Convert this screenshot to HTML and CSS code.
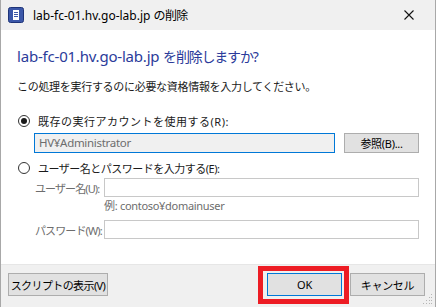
FILE: index.html
```html
<!DOCTYPE html>
<html lang="ja">
<head>
    <meta charset="UTF-8">
    <title>lab-fc-01.hv.go-lab.jp の削除</title>
    <link rel="stylesheet" href="styles.css">
</head>
<body>
    <div class="window">
        <div class="titlebar">
            <svg class="app-icon" width="16" height="16" viewBox="0 0 16 16">
                <rect x="0.5" y="0.5" width="15" height="15" rx="2" fill="#3b57a8" stroke="#1f3478"/>
                <rect x="5" y="3" width="6" height="10" fill="#fff"/>
                <rect x="6" y="5" width="4" height="1" fill="#3b57a8"/>
                <rect x="6" y="7" width="4" height="1" fill="#3b57a8"/>
                <rect x="6" y="9" width="4" height="1" fill="#3b57a8"/>
            </svg>
            <span class="title">lab-fc-01.hv.go-lab.jp <span class="cjk">の削除</span></span>
            <svg class="close" width="10" height="10" viewBox="0 0 10 10">
                <path d="M0.5 0.5 L9.5 9.5 M9.5 0.5 L0.5 9.5" stroke="#111" stroke-width="1.1"/>
            </svg>
        </div>

        <div class="content">
            <h1 class="instruction">lab-fc-01.hv.go-lab.jp <span class="cjk">を削除しますか?</span></h1>
            <p class="desc">この処理を実行するのに必要な資格情報を入力してください。</p>

            <label class="radio-row first">
                <span class="radio checked"></span>
                <span>既存の実行アカウントを使用する(R):</span>
            </label>
            <div class="account-row">
                <div class="textbox readonly focused">HV¥Administrator</div>
                <button class="btn">参照(B)...</button>
            </div>

            <label class="radio-row second">
                <span class="radio"></span>
                <span>ユーザー名とパスワードを入力する(E):</span>
            </label>
            <div class="cred-grid">
                <span class="field-label">ユーザー名(U):</span>
                <div class="textbox"></div>
                <span></span>
                <span class="hint">例: contoso¥domainuser</span>
                <span class="field-label">パスワード(W):</span>
                <div class="textbox"></div>
            </div>
        </div>

        <div class="footer">
            <button class="btn script-btn">スクリプトの表示(V)</button>
            <div class="spacer"></div>
            <div class="ok-wrap">
                <button class="btn default">OK</button>
                <div class="highlight"></div>
            </div>
            <button class="btn">キャンセル</button>
            <svg class="grip" width="10" height="10" viewBox="0 0 10 10">
                <rect x="8" y="0" width="1" height="1" fill="#b5b5b5"/>
                <rect x="6" y="3" width="1" height="1" fill="#b5b5b5"/>
                <rect x="8" y="3" width="1" height="1" fill="#b5b5b5"/>
                <rect x="3" y="6" width="1" height="1" fill="#b5b5b5"/>
                <rect x="6" y="6" width="1" height="1" fill="#b5b5b5"/>
                <rect x="8" y="6" width="1" height="1" fill="#b5b5b5"/>
                <rect x="0" y="9" width="1" height="1" fill="#b5b5b5"/>
                <rect x="3" y="9" width="1" height="1" fill="#b5b5b5"/>
                <rect x="6" y="9" width="1" height="1" fill="#b5b5b5"/>
                <rect x="8" y="9" width="1" height="1" fill="#b5b5b5"/>
            </svg>
        </div>
    </div>
</body>
</html>
```

FILE: styles.css
```css
/* 基础 */
body {
    margin: 0;
    font-family: 'Noto Sans', 'Noto Sans CJK JP', sans-serif;
    font-size: 11px;
    letter-spacing: -0.3px;
    color: #1a1a1a;
    background: #fff;
}

.window {
    width: 436px;
    height: 307px;
    box-sizing: border-box;
    border-left: 1px solid #a8a8a8;
    border-right: 1px solid #a8a8a8;
    display: flex;
    flex-direction: column;
    background: #fff;
}

/* 标题栏 */
.titlebar {
    height: 30px;
    flex-shrink: 0;
    display: flex;
    align-items: center;
    background: #f0f0f0;
    padding: 0 21px 0 7px;
}

.app-icon {
    margin-right: 9px;
}

.title {
    flex-grow: 1;
    font-size: 12px;
    letter-spacing: 0;
    color: #000;
}

.title .cjk {
    letter-spacing: -0.6px;
}

/* 内容 */
.content {
    flex-grow: 1;
    padding: 16px 16px 0 16px;
}

.instruction {
    margin: 0;
    font-size: 15px;
    font-weight: normal;
    letter-spacing: -0.2px;
    line-height: 20px;
    color: #2b3b9a;
}

.instruction .cjk {
    font-size: 14px;
    letter-spacing: -1.2px;
}

.desc {
    margin: 12px 0 0 0;
    line-height: 16px;
}

.radio-row {
    display: flex;
    align-items: center;
    gap: 8px;
    height: 16px;
    margin-top: 18px;
}

.radio-row.first {
    letter-spacing: 0.5px;
}

.radio-row.second {
    margin-top: 7px;
    letter-spacing: -0.5px;
}

.radio {
    width: 10px;
    height: 10px;
    border: 1px solid #333;
    border-radius: 50%;
    position: relative;
    margin-left: 1px;
    flex-shrink: 0;
}

.radio.checked::after {
    content: '';
    position: absolute;
    left: 2px;
    top: 2px;
    width: 6px;
    height: 6px;
    border-radius: 50%;
    background: #1a1a1a;
}

.account-row {
    display: flex;
    gap: 9px;
    margin: 4px 0 0 17px;
}

.textbox {
    flex-grow: 1;
    height: 18px;
    border: 1px solid #c8c8c8;
    background: #fff;
    padding: 0 4px;
    line-height: 18px;
}

.textbox.readonly {
    background: #f0f0f0;
    color: #6d6d6d;
    font-size: 11.5px;
}

.textbox.focused {
    border-color: #0078d7;
}

.btn {
    width: 75px;
    height: 20px;
    padding: 0;
    border: 1px solid #adadad;
    background: #e1e1e1;
    font-family: inherit;
    font-size: 11px;
    letter-spacing: -0.3px;
    color: #000;
    white-space: nowrap;
}

.cred-grid {
    display: grid;
    grid-template-columns: 69px 1fr;
    align-items: center;
    margin: 2px 0 0 18px;
}

.cred-grid .textbox {
    height: 17px;
    padding: 0;
}

.field-label {
    color: #6d6d6d;
    white-space: nowrap;
    letter-spacing: -0.9px;
}

.hint {
    color: #6d6d6d;
    line-height: 16px;
    margin: 1px 0 6px 0;
}

/* 底部按钮栏 */
.footer {
    height: 43px;
    flex-shrink: 0;
    box-sizing: border-box;
    border-top: 1px solid #e6e6e6;
    background: #f0f0f0;
    display: flex;
    align-items: flex-start;
    padding: 8px 10px 0 7px;
    position: relative;
}

.footer .btn {
    height: 23px;
}

.footer .script-btn {
    width: 100px;
    letter-spacing: -0.6px;
}

.spacer {
    flex-grow: 1;
}

.ok-wrap {
    position: relative;
    margin-right: 8px;
}

.btn.default {
    border-color: #0078d7;
    display: block;
}

/* 红框标注 */
.highlight {
    position: absolute;
    left: -9px;
    top: -7px;
    right: -7px;
    bottom: -8px;
    border: 5px solid #ed1c24;
}

.grip {
    position: absolute;
    right: 2px;
    bottom: 3px;
}
```
